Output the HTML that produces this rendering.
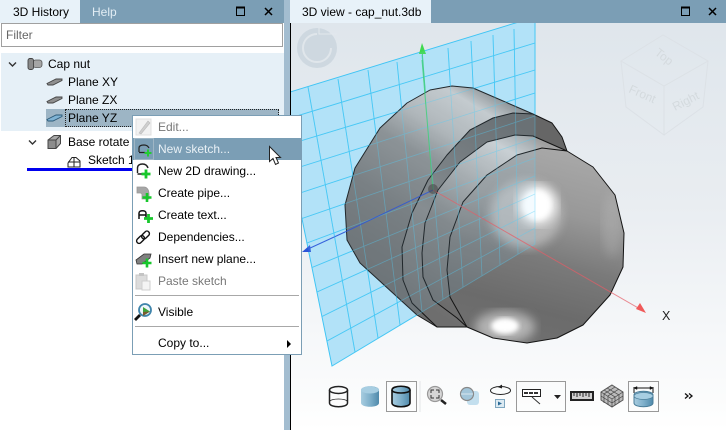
<!DOCTYPE html>
<html><head><meta charset="utf-8">
<style>
html,body{margin:0;padding:0}
body{width:726px;height:430px;overflow:hidden;position:relative;background:#fff;font-family:"Liberation Sans",sans-serif;font-size:12px;color:#000}
.a{position:absolute}
.t{position:absolute;white-space:nowrap;line-height:16px}
.m{position:absolute;left:25px;white-space:nowrap;line-height:16px}
</style></head><body>
<!-- 3D view -->
<svg class="a" style="left:0;top:0" width="726" height="430" viewBox="0 0 726 430">
<defs>
<linearGradient id="bg" gradientUnits="userSpaceOnUse" x1="0" y1="23" x2="0" y2="430"><stop offset="0" stop-color="#dfe6ec"/><stop offset=".45" stop-color="#e9edf1"/><stop offset=".75" stop-color="#f5f7f9"/><stop offset=".92" stop-color="#fbfcfc"/><stop offset="1" stop-color="#fff"/></linearGradient>
<linearGradient id="body" gradientUnits="userSpaceOnUse" x1="482" y1="85" x2="370" y2="270"><stop offset="0" stop-color="#8a8a8a"/><stop offset=".1" stop-color="#cacaca"/><stop offset=".27" stop-color="#b4b4b4"/><stop offset=".42" stop-color="#8c8c8c"/><stop offset=".7" stop-color="#757575"/><stop offset="1" stop-color="#6a6a6a"/></linearGradient>
<linearGradient id="band" gradientUnits="userSpaceOnUse" x1="510" y1="120" x2="400" y2="290"><stop offset="0" stop-color="#666"/><stop offset=".3" stop-color="#747474"/><stop offset=".6" stop-color="#858585"/><stop offset="1" stop-color="#6e6e6e"/></linearGradient>
<linearGradient id="band2" gradientUnits="userSpaceOnUse" x1="520" y1="130" x2="420" y2="300"><stop offset="0" stop-color="#a0a0a0"/><stop offset=".12" stop-color="#cfcfcf"/><stop offset=".35" stop-color="#a8a8a8"/><stop offset=".6" stop-color="#808080"/><stop offset="1" stop-color="#6a6a6a"/></linearGradient>
<linearGradient id="sph" gradientUnits="userSpaceOnUse" x1="560" y1="150" x2="510" y2="345"><stop offset="0" stop-color="#a8a8a8"/><stop offset=".3" stop-color="#989898"/><stop offset=".55" stop-color="#7a7a7a"/><stop offset=".8" stop-color="#6b6b6b"/><stop offset="1" stop-color="#707070"/></linearGradient>
<filter id="b4"><feGaussianBlur stdDeviation="5"/></filter>
<filter id="b2"><feGaussianBlur stdDeviation="2.500"/></filter>
<clipPath id="view"><rect x="291" y="23" width="435" height="407"/></clipPath>
<clipPath id="sc"><path d="M567,151L593,167L615,195L624,233L623,267L610,295L583,325L557,338L527,343L493,338L467,327L463,320L450,297L447,270L450,237L463,202L487,175L517,155L542,148Z"/></clipPath>
<linearGradient id="cyl" x1="0" y1="0" x2="1" y2="0"><stop offset="0" stop-color="#a8cde0"/><stop offset=".5" stop-color="#7fb0cb"/><stop offset="1" stop-color="#4f8aab"/></linearGradient>
</defs>
<rect x="290" y="23" width="436" height="407" fill="url(#bg)"/>
<!-- compass -->
<circle cx="317" cy="48" r="20" fill="#ced8e0"/>
<path d="M317,34A14,14 0 1 0 331,48" fill="none" stroke="#e0e6eb" stroke-width="2"/>
<path d="M319,28V34H337" fill="none" stroke="#e3e8ed" stroke-width="1"/>
<!-- view cube -->
<g fill="none" stroke="#dce1e6" stroke-width="1">
<path d="M621,61L663,35L708,61L664,86ZM621,61L626,107L664,135L664,86M708,61L703,107L664,135"/>
</g>
<g font-family="Liberation Sans" font-size="12" fill="#d4dade">
<text transform="translate(654,54) rotate(38)">Top</text>
<text transform="translate(628,92) rotate(24)">Front</text>
<text transform="translate(675,111) rotate(-27)">Right</text>
</g>
<g clip-path="url(#view)">
<!-- plane -->
<path d="M277,96L535,17V244L332,366Z" fill="#b6e4f8" stroke="#3cc4f4" stroke-width="1"/>
<g stroke="#3cc4f4" stroke-width=".9" fill="none">
<path d="M308,87L355,352M338,79L378,338M368,70L400,325M397,62L422,312M422,55L443,299M448,48L463,287M471,41L482,276M493,35L500,265M514,29L518,254"/>
<path d="M282,120.500L535,43M287,145L535,70M292,169.500L535,93M297,194L535,116M302,218.500L535,138M307,243L535,158M312,267.500L535,176M317,292L535,194M322,316.500L535,211M327,341L535,228"/>
</g>
<!-- axes behind -->
<path d="M433,190L422,50" stroke="#3fd06a" stroke-width="1"/>
<path d="M422,43L419,54H426Z" fill="#3fd94f"/>
<path d="M345,232L308,249" stroke="#2b55d8" stroke-width="1"/>
<path d="M302,252L310,245L311,252Z" fill="#2b55d8"/>
<!-- model -->
<path d="M452,86L473,88L533,114L552,123L562,137L567,151L593,167L615,195L624,233L623,267L610,295L583,325L557,338L527,343L493,338L467,327L437,327L417,315L360,263L347,240L345,205L355,168L380,128L407,103L430,90Z" fill="url(#body)"/>
<path d="M533,114L552,123L562,137L567,151L542,148L517,155L487,175L463,202L450,237L447,270L450,297L463,320L467,327L437,327L412,303L403,280L402,247L412,213L428,180L447,155L470,130L493,118L513,113Z" fill="url(#band)"/>
<path d="M567,151L533,136L515,135L487,142L460,162L438,190L425,223L422,253L423,277L433,300L457,318L467,327L463,320L450,297L447,270L450,237L463,202L487,175L517,155L542,148Z" fill="url(#band2)"/>
<path d="M567,151L593,167L615,195L624,233L623,267L610,295L583,325L557,338L527,343L493,338L467,327L463,320L450,297L447,270L450,237L463,202L487,175L517,155L542,148Z" fill="url(#sph)"/>
<g clip-path="url(#sc)">
<ellipse cx="526" cy="214" rx="36" ry="34" fill="#c6c6c6" opacity=".7" filter="url(#b4)"/>
<circle cx="537" cy="205" r="20" fill="#f0f0f0" filter="url(#b4)"/>
<ellipse cx="537" cy="205" rx="14" ry="15" fill="#fff" filter="url(#b2)"/>
<ellipse cx="505" cy="327" rx="30" ry="16" fill="#c4c4c4" opacity=".8" filter="url(#b4)"/>
<ellipse cx="505" cy="326" rx="14" ry="8" fill="#fff" filter="url(#b2)"/>
<ellipse cx="612" cy="225" rx="10" ry="32" fill="#c0c0c0" opacity=".3" filter="url(#b4)"/>
</g>
<g fill="none" stroke="#141414" stroke-width="1" stroke-linejoin="round">
<path d="M452,86L473,88L533,114L552,123L562,137L567,151L593,167L615,195L624,233L623,267L610,295L583,325L557,338L527,343L493,338L467,327L437,327L417,315L360,263L347,240L345,205L355,168L380,128L407,103L430,90Z"/>
<path d="M533,114L513,113L493,118L470,130L447,155L428,180L412,213L402,247L403,280L412,303L437,327"/>
<path d="M567,151L533,136L515,135L487,142L460,162L438,190L425,223L422,253L423,277L433,300L457,318L467,327"/>
<path d="M567,151L542,148L517,155L487,175L463,202L450,237L447,270L450,297L463,320L467,327"/>
</g>
<!-- plane in front -->
<path d="M332,366L277,96L535,17V244Z" fill="#8fdcfb" opacity=".1"/>
<g stroke="#52cdf5" stroke-width=".8" fill="none" opacity=".42">
<path d="M308,87L355,352M338,79L378,338M368,70L400,325M397,62L422,312M422,55L443,299M448,48L463,287M471,41L482,276M493,35L500,265M514,29L518,254"/>
<path d="M282,120.500L535,43M287,145L535,70M292,169.500L535,93M297,194L535,116M302,218.500L535,138M307,243L535,158M312,267.500L535,176M317,292L535,194M322,316.500L535,211M327,341L535,228"/>
<path d="M535,17V244L332,366"/>
</g>
<!-- axes front -->
<path d="M422,60L433,190" stroke="#3fd06a" stroke-width="1" opacity=".75"/>
<path d="M433,190L345,232" stroke="#2b55d8" stroke-width="1" opacity=".8"/>
<path d="M433,190L640,309" stroke="#e65c66" stroke-width="1" opacity=".7"/>
<path d="M646,313L636,309L640,303Z" fill="#f05a5a"/>
<circle cx="433" cy="189" r="5" fill="#444" opacity=".55"/>
</g>
<text x="662" y="320" font-family="Liberation Sans" font-size="12.500" fill="#222">X</text>
<!-- toolbar -->
<g fill="none">
<!-- wire cyl -->
<g stroke="#222" stroke-width="1.500"><ellipse cx="338.500" cy="390" rx="9" ry="3.500"/><path d="M329.500,390V403C329.500,408 347.500,408 347.500,403V390"/><path d="M329.500,402C329.500,398 347.500,398 347.500,402" stroke-width=".8"/></g>
<!-- solid cyl -->
<path d="M361,390C361,385 379,385 379,390V403C379,408 361,408 361,403Z" fill="url(#cyl)"/>
<ellipse cx="370" cy="390" rx="9" ry="3.500" fill="#a7cee2"/>
<!-- selected -->
<rect x="386.500" y="381.500" width="30" height="30" stroke="#999"/>
<path d="M392,390C392,385 410,385 410,390V403C410,408 392,408 392,403Z" fill="url(#cyl)" stroke="#111" stroke-width="1.600"/>
<path d="M392,390C392,394 410,394 410,390" stroke="#111" stroke-width="1.600"/>
<path d="M420,381V412" stroke="#e4e6e8"/>
<!-- magnifier -->
<circle cx="435" cy="394" r="7.500" fill="#d6d6d6" stroke="#999" stroke-width="1.200"/>
<path d="M441,400L446,404" stroke="#222" stroke-width="2.500"/>
<path d="M431,393V390H434M436,390H439V393M439,395V398H436M434,398H431V395" stroke="#333"/>
<!-- views -->
<rect x="467" y="391" width="12" height="14" rx="3" fill="#bcdcec" opacity=".9"/>
<circle cx="467" cy="394" r="6.500" fill="#a3c6da" stroke="#888" stroke-width="1.200"/>
<path d="M461,394H473" stroke="#d8e6ee"/>
<!-- rotate -->
<ellipse cx="500.500" cy="390.500" rx="10" ry="4" stroke="#222" stroke-width="1"/>
<path d="M502,385L499,387L502,388" fill="#222" stroke="#222"/>
<rect x="495.500" y="399.500" width="9" height="8" fill="#dceaf2" stroke="#7ea6bf"/>
<path d="M498,401.500V405.500L502,403.500Z" fill="#2b6a96"/>
<!-- dropdown btn -->
<rect x="516.500" y="381.500" width="49" height="30" stroke="#999"/>
<rect x="522.500" y="389.500" width="18" height="7" fill="#fff" stroke="#222"/>
<path d="M524,393H539" stroke="#333" stroke-width="2" stroke-dasharray="4 1"/>
<path d="M532,397L540,404" stroke="#333"/>
<path d="M554,395H561L557.500,399Z" fill="#222"/>
<!-- ruler -->
<rect x="571" y="392" width="22" height="8" fill="#d0d0d0" stroke="#222" stroke-width="2"/>
<path d="M574,392V396M577,392V397M580,392V396M583,392V397M586,392V396M589,392V397" stroke="#222"/>
<!-- mesh -->
<path d="M612,385L623,392L623,400L612,407L601,400L601,392Z" fill="#bbb" stroke="#555"/>
<path d="M601,392L612,399L623,392M612,399V407M604,390L615,397V405M607,388L619,395V403M608,405V396L619,389M604,403V394L615,387M601,396L612,403L623,396" stroke="#444" stroke-width=".7"/>
<!-- dim -->
<rect x="628.500" y="381.500" width="30" height="30" stroke="#999"/>
<path d="M634,387V393M653,387V393M634,388H653" stroke="#111"/>
<path d="M634,388L637,386.500V389.500ZM653,388L650,386.500V389.500Z" fill="#111" stroke="#111" stroke-width=".5"/>
<path d="M634,395C634,390 653,390 653,395V403C653,408 634,408 634,403Z" fill="url(#cyl)" stroke="#4a7d99"/>
<ellipse cx="643.500" cy="396" rx="9.500" ry="3.500" fill="#a7cee2" stroke="#4a7d99" stroke-width=".7"/>
<!-- >> -->
<path d="M685,393.500L688,396L685,398.500M689,393.500L692,396L689,398.500" stroke="#111" stroke-width="1.300"/>
</g>
</svg>

<!-- splitter -->
<div class="a" style="left:284px;top:0;width:6px;height:430px;background:#a3bdd0"></div>
<div class="a" style="left:290px;top:23px;width:1px;height:407px;background:#000"></div>
<!-- view tab bar -->
<div class="a" style="left:290px;top:0;width:436px;height:23px;background:#7b9eb5"></div>
<div class="a" style="left:290px;top:0;width:141px;height:23px;background:#e8f2f9"></div>
<div class="t" style="left:302px;top:4px">3D view - cap_nut.3db</div>
<svg class="a" style="left:680px;top:3px" width="46" height="16" fill="none" stroke="#000">
<path d="M1.500,4.500H9.500V12.500H1.500Z"/><path d="M1,4.500H10" stroke-width="2"/><path d="M29,5L36,12M36,5L29,12" stroke-width="1.500"/>
</svg>
<!-- left panel -->
<div class="a" style="left:0;top:0;width:284px;height:23px;background:#7b9eb5"></div>
<div class="a" style="left:0;top:0;width:80px;height:23px;background:#e8f2f9"></div>
<div class="t" style="left:13px;top:4px">3D History</div>
<div class="t" style="left:92px;top:4px;color:#e2edf4">Help</div>
<svg class="a" style="left:230px;top:3px" width="54" height="16" fill="none" stroke="#000">
<path d="M6.500,4.500H14.500V12.500H6.500Z"/><path d="M6,4.500H15" stroke-width="2"/><path d="M35,5L42,12M42,5L35,12" stroke-width="1.500"/>
</svg>
<div class="a" style="left:1px;top:23px;width:280px;height:22px;border:1px solid #a0a0a0;background:#fff"></div>
<div class="t" style="left:6px;top:27px;color:#666">Filter</div>
<div class="a" style="left:1px;top:53px;width:283px;height:78px;background:#e6f0f7"></div>
<div class="a" style="left:46px;top:109px;width:233px;height:18px;background:#9db5c5"></div>
<div class="a" style="left:65px;top:109px;width:212px;height:16px;border:1px dotted #222"></div>
<div class="t" style="left:48px;top:56px">Cap nut</div>
<div class="t" style="left:68px;top:74px">Plane XY</div>
<div class="t" style="left:68px;top:92px">Plane ZX</div>
<div class="t" style="left:68px;top:110px">Plane YZ</div>
<div class="t" style="left:68px;top:134px">Base rotate 1</div>
<div class="t" style="left:88px;top:152px">Sketch 1</div>
<div class="a" style="left:27px;top:168px;width:106px;height:3px;background:#0000ee"></div>
<svg class="a" style="left:0;top:50px" width="90" height="120" fill="none">
<path d="M9,12.500L12.500,16L16,12.500" stroke="#333" stroke-width="1.400"/>
<path d="M29,11.500L32.500,15L36,11.500" stroke="#333" stroke-width="1.400" transform="translate(0,79)"/>
<rect x="33" y="10" width="9" height="7.500" rx="2.500" fill="#a5a5a5" stroke="#555" stroke-width=".8"/>
<rect x="28" y="8.500" width="5.500" height="11" rx="2" fill="#8a8a8a" stroke="#444" stroke-width=".9"/>
<path d="M47,33.500L56,29H62V30.500L53,35H48Z" fill="#8f8f8f" stroke="#444" stroke-width=".9"/>
<path d="M47,51.500L56,47H62V48.500L53,53H48Z" fill="#8f8f8f" stroke="#444" stroke-width=".9"/>
<path d="M47,69.500L56,65H62V66.500L53,71H48Z" fill="#7fb3d4" stroke="#2c5a78" stroke-width=".9"/>
<path d="M48,90L54,85.500H60.500V93.500L56,98.500H48Z" fill="#a8a8a8" stroke="#444"/>
<path d="M48,90H56V98.500M56,90L60.500,85.500" stroke="#444"/>
<path d="M48.500,90.500H55.500V98H48.500Z" fill="#8c8c8c"/>
<path d="M68,117V113L72,107.500H76L80,111V117Z" fill="#fff" stroke="#222"/>
<path d="M74,107.500V117M68,112H80" stroke="#222"/>
</svg>
<!-- menu -->
<div class="a" style="left:132px;top:115px;width:168px;height:238px;background:#fff;border:1px solid #7b9eb5">
<div class="a" style="left:0;top:22px;width:168px;height:22px;background:#7b9eb5"></div>
<div class="a" style="left:1px;top:22px;width:18px;height:20px;border:1px solid #9fb6c5;background:#7b9eb5"></div>
<div class="m" style="top:3px;color:#777">Edit...</div>
<div class="m" style="top:25px;color:#e8f0f5">New sketch...</div>
<div class="m" style="top:47px">New 2D drawing...</div>
<div class="m" style="top:69px">Create pipe...</div>
<div class="m" style="top:91px">Create text...</div>
<div class="m" style="top:113px">Dependencies...</div>
<div class="m" style="top:135px">Insert new plane...</div>
<div class="m" style="top:157px;color:#777">Paste sketch</div>
<div class="a" style="left:2px;top:179px;width:164px;height:1px;background:#a8a8a8"></div>
<div class="m" style="top:188px">Visible</div>
<div class="a" style="left:2px;top:210px;width:164px;height:1px;background:#a8a8a8"></div>
<div class="m" style="top:219px">Copy to...</div>
<div class="a" style="left:154px;top:224px;border-left:4px solid #000;border-top:4px solid transparent;border-bottom:4px solid transparent"></div>
</div>
<svg class="a" style="left:132px;top:115px" width="24" height="240" fill="none">
<!-- edit -->
<rect x="4" y="4" width="15" height="16" fill="#f2f2f2" stroke="#e0e0e0"/>
<path d="M7,18L16,6L18,8L9,19Z" fill="#cfcfcf" stroke="#bbb" stroke-width=".6"/>
<!-- new sketch -->
<path d="M7,37V33C7,31 9,30 12,30C14,30 16,31 17,33M7,37.500H13" stroke="#222" stroke-width="1.200"/>
<path d="M16,34.500V41.500M12.500,38H19.500" stroke="#22cc33" stroke-width="2"/>
<!-- 2d -->
<path d="M5.500,58V53C5.500,50 8,49 10.500,49C13,49 15,50 16,53M5.500,59H12" stroke="#222" stroke-width="1.400"/>
<path d="M14,54.500V63.500M9.500,59H18.500" stroke="#18c72c" stroke-width="2.800"/>
<!-- pipe -->
<path d="M5,72H12C15,72 17,75 17,79V84H10V80C10,78 9,78 8,78H5Z" fill="#a6a6a6" stroke="#999" stroke-width=".8"/>
<path d="M15,78V87M10.500,82.500H19.500" stroke="#18c72c" stroke-width="2.600"/>
<!-- text -->
<path d="M7,104V98C7,95 14,95 14,98V104M7,100H14" stroke="#111" stroke-width="1.500"/>
<path d="M16.500,99V108M12,103.500H21" stroke="#18c72c" stroke-width="2.800"/>
<!-- deps -->
<rect x="4" y="-2.500" width="9" height="5" rx="2.500" stroke="#111" stroke-width="1.400" transform="translate(8.500,124.500) rotate(-45) translate(-8.500,0)"/>
<rect x="4" y="-2.500" width="9" height="5" rx="2.500" stroke="#111" stroke-width="1.400" transform="translate(13.500,120) rotate(-45) translate(-8.500,0)"/>
<!-- insert plane -->
<path d="M4,145L12,139H19L18,143L10,149H5Z" fill="#808080" stroke="#333" stroke-width=".8"/>
<path d="M15,143.500V152.500M10.500,148H19.500" stroke="#18c72c" stroke-width="2.600"/>
<!-- paste -->
<rect x="4" y="160" width="11" height="14" fill="#dcdcdc" stroke="#c8c8c8"/>
<rect x="7" y="158" width="5" height="3" fill="#c4c4c4"/>
<rect x="10" y="166" width="8" height="9" fill="#f4f4f4" stroke="#cfcfcf"/>
<!-- visible -->
<circle cx="13" cy="195" r="6" fill="#eef5f9" stroke="#3f84ab" stroke-width="1.800"/>
<path d="M8,200L3,205" stroke="#111" stroke-width="2.800"/>
<path d="M11,192L18,196.500L11,201Z" fill="#3da33d"/><path d="M11,197L18,196.500L11,201Z" fill="#7a5a30"/>
</svg>
<!-- cursor -->
<svg class="a" style="left:267px;top:145px" width="18" height="24">
<path d="M2.500,1.500V16.500L6,13.500L8.500,19.500L11.500,18L9,12.500H13.500Z" fill="#fff" stroke="#222" stroke-width="1"/>
</svg>
</body></html>
